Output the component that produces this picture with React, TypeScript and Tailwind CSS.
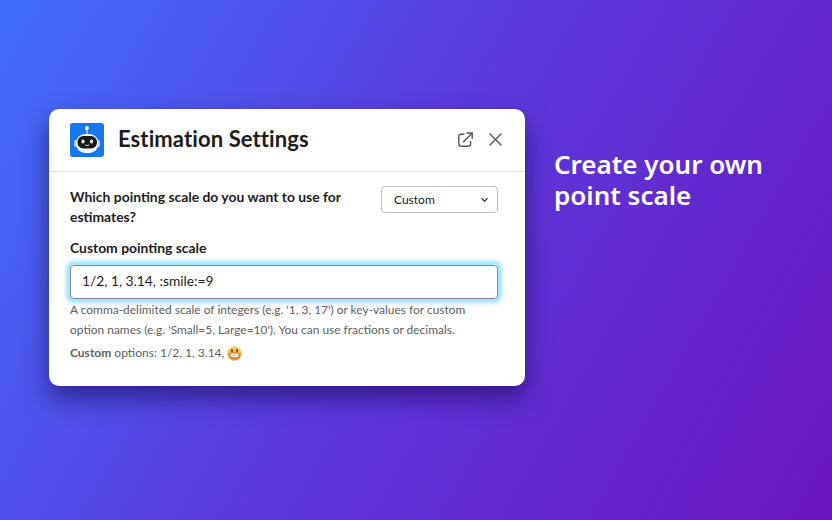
export default function App() {
  return (
    <div className="flex h-[520px] w-[832px] items-start gap-[29px] overflow-hidden bg-[linear-gradient(120deg,#3f6ffb_0%,#5b3bdc_45%,#6a16bf_100%)] pl-[49px] pt-[109px] font-['Lato',sans-serif]">
      <div className="flex h-[277px] w-[476px] shrink-0 flex-col rounded-[10px] bg-white shadow-[0_12px_24px_rgba(20,10,80,0.6)]">
        <div className="flex h-[63px] shrink-0 items-center border-b border-[#e3e3e3] pl-[21px] pr-[22px]">
          <svg width="34" height="34" viewBox="0 0 34 34" className="shrink-0">
            <rect width="34" height="34" rx="3" fill="#1578ec" />
            <rect x="16.4" y="5" width="1.2" height="7" fill="#e8f2ff" />
            <circle cx="17" cy="5" r="2" fill="#f2f7ff" />
            <rect x="4" y="17" width="3" height="7" rx="1.5" fill="#a9cdf7" />
            <rect x="27" y="17" width="3" height="7" rx="1.5" fill="#a9cdf7" />
            <rect x="6" y="11" width="22.5" height="19" rx="9" fill="#f4f7fb" />
            <rect x="7.5" y="13" width="19.5" height="12.5" rx="6" fill="#17181c" />
            <ellipse cx="13" cy="18.5" rx="1.6" ry="1.9" fill="#fff" />
            <ellipse cx="21.5" cy="18.5" rx="1.6" ry="1.9" fill="#fff" />
            <path d="M15.2 21.8 q2 1.6 4 0" stroke="#fff" strokeWidth="0.9" fill="none" />
          </svg>
          <h1 className="mb-[2px] ml-[14px] text-[22px] font-bold leading-none tracking-[0.1px] text-[#1d1c1d]">Estimation Settings</h1>
          <div className="mb-[2px] ml-auto flex items-center gap-[15px] text-[#555]">
            <svg width="15" height="15" viewBox="0 0 15 15" fill="none" stroke="currentColor" strokeWidth="1.4" strokeLinecap="round" strokeLinejoin="round">
              <path d="M6 2.2H3a2.2 2.2 0 0 0-2.2 2.2v7.4A2.4 2.4 0 0 0 3.2 14.2h7.2a2.2 2.2 0 0 0 2.2-2.2V9.5" />
              <path d="M5.5 9.8 14 1.2" />
              <path d="M8.8 1h5.4v5.4" />
            </svg>
            <svg width="15" height="15" viewBox="0 0 15 15" fill="none" stroke="currentColor" strokeWidth="1.4" strokeLinecap="round">
              <path d="M2 2l11 11M13 2 2 13" />
            </svg>
          </div>
        </div>
        <div className="flex flex-col pl-[21px] pr-[27px] pt-[14px]">
          <div className="flex items-start justify-between">
            <div className="mt-px w-[290px] text-[13.9px] font-bold leading-[20px] text-[#1d1c1d]">Which pointing scale do you want to use for estimates?</div>
            <div className="flex h-[27px] w-[117px] items-center justify-between rounded-[4px] border border-[#bdbdbd] pl-[12px] pr-[8px] text-[12px] text-[#1d1c1d]">
              <span>Custom</span>
              <svg width="9" height="6" viewBox="0 0 9 6" fill="none" stroke="#444" strokeWidth="1.3"><path d="M1.5 1.3 4.5 4.3 7.5 1.3" /></svg>
            </div>
          </div>
          <div className="mt-[11px] text-[13.9px] font-bold leading-[20px] text-[#1d1c1d]">Custom pointing scale</div>
          <div className="mt-[7px] flex h-[34px] items-center rounded-[4px] border border-[#868686] pb-px pl-[11px] text-[13.8px] text-[#1d1c1d] shadow-[0_0_0_3px_#a8e8ff,0_0_4px_4px_rgba(130,220,255,0.75)]">1/2, 1, 3.14, :smile:=9</div>
          <p className="mt-px text-[11.95px] leading-[20px] text-[#616061]">A comma-delimited scale of integers (e.g. '1, 3, 17') or key-values for custom option names (e.g. 'Small=5, Large=10'). You can use fractions or decimals.</p>
          <p className="mt-[3px] flex items-center text-[12px] leading-[20px] text-[#616061]"><b className="font-bold">Custom</b>&nbsp;options: 1/2, 1, 3.14,&nbsp;
            <svg width="15" height="15" viewBox="0 0 15 15">
              <defs>
                <linearGradient id="face" x1="0" y1="0" x2="0" y2="1">
                  <stop offset="0" stopColor="#fbd25a" />
                  <stop offset="1" stopColor="#ee8f1f" />
                </linearGradient>
              </defs>
              <circle cx="7.5" cy="7.5" r="7.2" fill="url(#face)" />
              <rect x="2.8" y="7" width="9.4" height="4.8" rx="2.3" fill="#fff" stroke="#6b4410" strokeWidth="0.6" />
              <path d="M7.5 7v4.8M5.3 7v4.8M9.7 7v4.8M2.8 9.4h9.4" stroke="#a08a60" strokeWidth="0.3" />
              <ellipse cx="5" cy="4.6" rx="1" ry="1.3" fill="#5b3a10" />
              <ellipse cx="10" cy="4.6" rx="1" ry="1.3" fill="#5b3a10" />
            </svg>
          </p>
        </div>
      </div>
      <h2 className="mt-[40px] w-[240px] font-['Noto_Sans',sans-serif] text-[26px] font-semibold leading-[31px] text-white">Create your own point scale</h2>
    </div>
  );
}
